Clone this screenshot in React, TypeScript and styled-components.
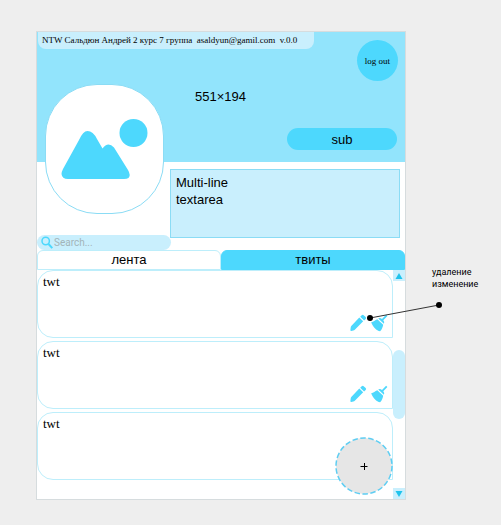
import React from "react";
import styled, { createGlobalStyle } from "styled-components";

const color = {
  page: "#eeeeee",
  frame: "#d6dcde",
  cover: "#92e4fc",
  pale: "#c9effd",
  accent: "#4dd8fd",
  line: "#bdeefb",
  edge: "#8bdcf5",
};

const sans = `"Liberation Sans", Arial, sans-serif`;
const serif = `"Liberation Serif", "Times New Roman", serif`;

const GlobalStyle = createGlobalStyle`
  *, *::before, *::after { box-sizing: border-box; }
  body { margin: 0; background: ${color.page}; color: #000; font-family: ${sans}; }
  button, input, textarea { margin: 0; padding: 0; border: 0; color: inherit; font: inherit; }
  button { cursor: pointer; }
`;

const Page = styled.div`
  display: grid;
  grid-template-columns: minmax(0, 1fr) 95px;
  padding: 31px 0 25px 36px;
`;

const Frame = styled.main`
  border: 1px solid ${color.frame};
  background: #fff;
`;

const Profile = styled.section`
  display: grid;
  grid-template-columns: 133px minmax(0, 1fr);
  grid-template-rows: auto 88px;
`;

const Cover = styled.header`
  grid-area: 1 / 1 / 2 / 3;
  display: flex;
  flex-direction: column;
  height: 130px;
  background: ${color.cover};
`;

const CoverTop = styled.div`
  display: flex;
  justify-content: space-between;
  align-items: flex-start;
  padding-right: 7px;
`;

const Credits = styled.div`
  padding: 0 17px 0 4px;
  margin-left: 1px;
  border-radius: 0 0 8px 8px;
  background: ${color.pale};
  font: 9px/17px ${serif};
  white-space: pre;
`;

const LogOut = styled.button`
  width: 41px;
  height: 41px;
  margin-top: 8px;
  border-radius: 50%;
  background: ${color.accent};
  font: 9px/12px ${serif};
  white-space: nowrap;
`;

const CoverSize = styled.div`
  margin: 8px 0 0 158px;
  font-size: 13px;
  line-height: 16px;
`;

const Subscribe = styled.button`
  align-self: flex-end;
  width: 110px;
  height: 22px;
  margin: 23px 8px 0 0;
  border-radius: 11px;
  background: ${color.accent};
  font-size: 13px;
`;

const Avatar = styled.div`
  grid-area: 1 / 1 / 3 / 2;
  align-self: start;
  width: 119px;
  height: 130px;
  margin: 52px 0 0 8px;
  border: 1px solid ${color.edge};
  border-radius: 52px;
  background: #fff;
  svg { display: block; width: 100%; height: 100%; }
`;

const Bio = styled.textarea`
  grid-area: 2 / 2;
  display: block;
  height: 69px;
  margin: 7px 5px 0 0;
  padding: 4px 5px;
  border: 1px solid ${color.edge};
  background: ${color.pale};
  font-size: 13px;
  line-height: 17px;
  resize: none;
  outline: none;
`;

const Search = styled.label`
  grid-area: 2 / 1;
  align-self: end;
  display: flex;
  align-items: center;
  gap: 1px;
  height: 15px;
  width: 134px;
  padding: 0 4px;
  border-radius: 8px;
  background: ${color.pale};
  svg { flex: none; }
`;

const SearchInput = styled.input`
  flex: 1;
  min-width: 0;
  background: none;
  outline: none;
  font: 10px/14px Roboto, sans-serif;
  &::placeholder { color: #a3b4b9; opacity: 1; }
`;

const Tabs = styled.div`
  display: grid;
  grid-template-columns: 1fr 1fr;
`;

const Tab = styled.button<{ $filled?: boolean }>`
  height: 20px;
  border: 1px solid ${(p) => (p.$filled ? color.accent : color.line)};
  border-radius: 6px 6px 0 0;
  background: ${(p) => (p.$filled ? color.accent : "#fff")};
  font-size: 13px;
  line-height: 18px;
`;

const Feed = styled.section`
  position: relative;
  display: grid;
  grid-template-columns: minmax(0, 1fr) 12px;
`;

const Posts = styled.div`
  display: flex;
  flex-direction: column;
  gap: 3px;
  padding-bottom: 19px;
`;

const Post = styled.article`
  display: flex;
  flex-direction: column;
  justify-content: space-between;
  height: 68px;
  padding: 3px 4px 5px 5px;
  border: 1px solid ${color.line};
  border-radius: 16px 16px 0 16px;
  font: 13px/15px ${serif};
`;

const Actions = styled.div`
  display: flex;
  justify-content: flex-end;
  gap: 4px;
`;

const IconButton = styled.button`
  width: 17px;
  height: 18px;
  background: none;
  svg { display: block; }
`;

const ScrollBar = styled.div`
  display: flex;
  flex-direction: column;
  justify-content: space-between;
`;

const ScrollArrow = styled.button`
  display: grid;
  place-items: center;
  height: 11px;
  background: ${color.pale};
`;

const ScrollThumb = styled.div`
  height: 69px;
  border-radius: 6px;
  background: ${color.pale};
`;

const AddButton = styled.button`
  position: absolute;
  right: 12px;
  bottom: 4px;
  width: 58px;
  height: 58px;
  border-radius: 50%;
  background: none;
  svg { display: block; }
`;

const Note = styled.aside`
  position: relative;
  align-self: start;
  margin-top: 235px;
  padding-left: 26px;
  font: 9px/12px Roboto, sans-serif;
`;

const NoteText = styled.p`
  margin: 0;
`;

const Connector = styled.svg`
  position: absolute;
  left: -40px;
  top: 34px;
  pointer-events: none;
`;

const Pencil = () => (
  <svg width="17" height="18" viewBox="0 0 17 18" fill={color.accent} aria-hidden="true">
    <path d="M9.3 3.600 13.200 7.300 4.800 15.700Q4.200 16.300 3.300 16.500L1.300 16.900Q.3 17 .4 16L.7 13.600Q.8 12.600 1.500 11.800Z" />
    <path d="M10.200 2.700 11.700 1.300Q12.800.4 13.900 1.400L15.700 3.100Q16.600 4.100 15.700 5.100L14.100 6.500Z" />
  </svg>
);

const Broom = () => (
  <svg width="17" height="18" viewBox="0 0 17 18" fill={color.accent} aria-hidden="true">
    <path d="M15.100.8 16.400 2 12.300 6.200Q13.900 8 12.900 9.700L7.200 4.500Q9.100 3.400 11 5Z" />
    <path d="M6.300 5.300 12.200 10.700C11.800 13.200 10.800 15.500 9.100 17.300 5.500 16.500 1.800 13 .2 8.200 2.600 8 4 6.300 6.300 5.300Z" />
  </svg>
);

const posts = [
  { id: 1, text: "twt", editable: true },
  { id: 2, text: "twt", editable: true },
  { id: 3, text: "twt", editable: false },
];

export default function App() {
  return (
    <>
      <GlobalStyle />
      <Page>
        <Frame>
          <Profile>
            <Cover>
              <CoverTop>
                <Credits>{"NTW Сальдюн Андрей 2 курс 7 группа  asaldyun@gamil.com  v.0.0"}</Credits>
                <LogOut type="button">log out</LogOut>
              </CoverTop>
              <CoverSize>551×194</CoverSize>
              <Subscribe type="button">sub</Subscribe>
            </Cover>
            <Avatar>
              <svg viewBox="0 0 117 128" fill={color.accent} role="img" aria-label="avatar">
                <circle cx="87.500" cy="48" r="14" />
                <path d="M17 84 33 55Q37 46 41.500 46 47 46 51 54L56.500 63.500Q62 56 68 62.500L82 85Q85 90 82.500 93 81 94 78 94H22Q16 94 15.500 89 15.500 87 17 84Z" />
              </svg>
            </Avatar>
            <Bio aria-label="bio" defaultValue={"Multi-line\ntextarea"} />
            <Search>
              <svg width="12" height="13" viewBox="0 0 12 13" fill="none" stroke={color.accent} aria-hidden="true">
                <circle cx="4.700" cy="5" r="3.700" strokeWidth="1.500" />
                <path d="M7.500 8 11.300 12.200" strokeWidth="2" />
              </svg>
              <SearchInput type="text" aria-label="Search" placeholder="Search..." />
            </Search>
          </Profile>
          <Tabs role="tablist">
            <Tab type="button" role="tab" aria-selected="true">лента</Tab>
            <Tab type="button" role="tab" aria-selected="false" $filled>твиты</Tab>
          </Tabs>
          <Feed>
            <Posts>
              {posts.map((post) => (
                <Post key={post.id}>
                  <span>{post.text}</span>
                  {post.editable && (
                    <Actions>
                      <IconButton type="button" aria-label="изменение"><Pencil /></IconButton>
                      <IconButton type="button" aria-label="удаление"><Broom /></IconButton>
                    </Actions>
                  )}
                </Post>
              ))}
            </Posts>
            <ScrollBar>
              <ScrollArrow type="button" aria-label="up">
                <svg width="8" height="6" viewBox="0 0 8 6" fill="#1fc3ec"><path d="M4 0 7.500 6H.5Z" /></svg>
              </ScrollArrow>
              <ScrollThumb />
              <ScrollArrow type="button" aria-label="down">
                <svg width="8" height="6" viewBox="0 0 8 6" fill="#1fc3ec"><path d="M.5 0H7.500L4 6Z" /></svg>
              </ScrollArrow>
            </ScrollBar>
            <AddButton type="button" aria-label="add">
              <svg width="58" height="58" viewBox="0 0 58 58" fill="none">
                <circle cx="29" cy="29" r="28" fill="#e6e6e6" stroke="#5ecdf2" strokeWidth="1.500" strokeDasharray="5.500 2.500" />
                <path d="M25.500 29.500H32.500M29.500 26V33" stroke="#000" />
              </svg>
            </AddButton>
          </Feed>
        </Frame>
        <Note>
          <NoteText>удаление</NoteText>
          <NoteText>изменение</NoteText>
          <Connector width="77" height="24" viewBox="0 0 77 24">
            <path d="M4 18 73 5" stroke="#333" />
            <circle cx="4" cy="18" r="3" />
            <circle cx="73" cy="5" r="3" />
          </Connector>
        </Note>
      </Page>
    </>
  );
}
